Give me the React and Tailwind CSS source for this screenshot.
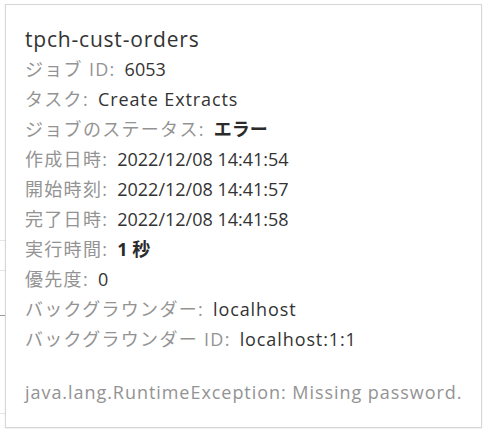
const rows = [
  { label: "ジョブ ID:", value: "6053" },
  { label: "タスク:", value: "Create Extracts", wide: true },
  { label: "ジョブのステータス:", value: "エラー", bold: true },
  { label: "作成日時:", value: "2022/12/08 14:41:54" },
  { label: "開始時刻:", value: "2022/12/08 14:41:57" },
  { label: "完了日時:", value: "2022/12/08 14:41:58" },
  { label: "実行時間:", value: "1 秒", bold: true },
  { label: "優先度:", value: "0" },
  { label: "バックグラウンダー:", value: "localhost", wide: true },
  { label: "バックグラウンダー ID:", value: "localhost:1:1", wide: true },
];

function valueClass(r) {
  if (r.bold) return "ml-[9px] text-[#2b2b2b] font-bold";
  if (r.wide) return "ml-[9px] text-[#333333] font-medium tracking-[0.9px]";
  return "ml-[9px] text-[#333333] font-medium";
}

export default function App() {
  return (
    <div
      className="relative w-[483px] h-[429px] bg-white overflow-hidden"
      style={{ fontFamily: '"Open Sans", "Noto Sans CJK JP", sans-serif' }}
    >
      {/* table lines peeking out behind the tooltip */}
      <div className="flex flex-col w-[5px]">
        <div className="mt-[240px] h-px bg-[#e6e6e6]" />
        <div className="mt-[29px] h-px bg-[#e6e6e6]" />
        <div className="mt-[44px] h-px bg-[#9a9a9a]" />
        <div className="mt-[97px] h-px bg-[#e6e6e6]" />
      </div>

      <div className="absolute left-[5px] top-[4px] w-[477px] h-[424px] bg-white border border-[#d6d6d6] shadow-[0_1px_2px_rgba(0,0,0,0.08)] pl-[19px] pt-[19px]">
        <div className="text-[21px] leading-[30px] text-[#333333] tracking-[0.8px]">tpch-cust-orders</div>
        {rows.map((r) => (
          <div key={r.label} className="flex items-baseline text-[18px] leading-[30px]">
            <span className="text-[#939393] tracking-[1.3px]">{r.label}</span>
            <span className={valueClass(r)}>{r.value}</span>
          </div>
        ))}
        <div className="mt-[23px] text-[18px] leading-[30px] text-[#939393] tracking-[0.95px]">
          java.lang.RuntimeException: Missing password.
        </div>
      </div>
    </div>
  );
}
